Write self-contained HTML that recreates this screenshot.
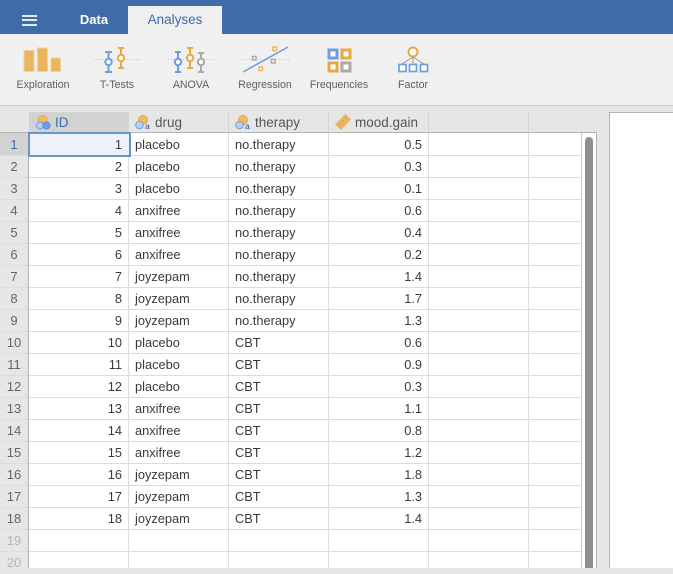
<!DOCTYPE html>
<html>
<head>
<meta charset="utf-8">
<style>
html,body{margin:0;padding:0;}
body{width:673px;height:568px;overflow:hidden;position:relative;background:#e6e6e6;font-family:"Liberation Sans",sans-serif;font-size:12px;color:#333;}
.a{position:absolute;}
#top{left:0;top:0;width:673px;height:34px;background:#3e6ca8;}
#tab{left:128px;top:6px;width:94px;height:28px;background:#f0f0f0;color:#3e6ca8;text-align:center;line-height:28px;font-size:13.5px;}
#data{left:60px;top:6px;width:68px;height:28px;color:#fff;text-align:center;line-height:28px;font-size:13px;font-weight:bold;}
.bar{left:22px;width:15px;height:2px;background:#e4eaf3;}
#tb{left:0;top:34px;width:673px;height:71px;background:#f0f0f0;border-bottom:1px solid #d0d0d0;}
.lbl{top:79px;height:12px;line-height:12px;font-size:10.6px;color:#606060;text-align:center;}
.hd{top:112px;height:20px;line-height:21px;font-size:13.5px;color:#555;}
.rh{left:0;width:28px;height:22px;line-height:23px;text-align:center;font-size:13px;color:#666;background:#e6e6e6;}
.row{left:0;width:581px;height:1px;background:#dcdcdc;}
.col{top:133px;width:1px;height:435px;background:#dcdcdc;}
.c{height:22px;line-height:23px;font-size:12.8px;color:#3a3a3a;white-space:nowrap;}
.n{text-align:right;}
</style>
</head>
<body>
<div class="a" id="top"></div>
<div class="a bar" style="top:15px"></div>
<div class="a bar" style="top:19px"></div>
<div class="a bar" style="top:24px"></div>
<div class="a" id="data">Data</div>
<div class="a" id="tab">Analyses</div>
<div class="a" id="tb"></div>

<svg class="a" style="left:0;top:34px" width="673" height="71" viewBox="0 34 673 71">
<g fill="#ebb55e" stroke="#f1d29b" stroke-width="1">
<rect x="24" y="50.500" width="10" height="21"/><rect x="37.500" y="48" width="10" height="23.500"/><rect x="51" y="58" width="9.500" height="13.500"/>
</g>
<g stroke="#b9c7d8" stroke-width="1" stroke-dasharray="1 2">
<line x1="94" y1="59.500" x2="140" y2="59.500"/><line x1="168" y1="59.500" x2="214" y2="59.500"/><line x1="243" y1="59.500" x2="289" y2="59.500"/>
</g>
<g fill="none" stroke-width="2">
<g stroke="#6d9ee3"><path d="M105 52h7M108.500 52v19M105 72h7"/><circle cx="108.500" cy="62" r="3.200" fill="#fff"/></g>
<g stroke="#e6aa43"><path d="M118 48h6M121 48v20M118 68h6"/><circle cx="121" cy="58" r="3.200" fill="#fff"/></g>
<g stroke="#6d9ee3"><path d="M175 52h6M178 52v19M175 72h6"/><circle cx="178" cy="62" r="3.200" fill="#fff"/></g>
<g stroke="#e6aa43"><path d="M187 48h6M190 48v20M187 68h6"/><circle cx="190" cy="58" r="3.200" fill="#fff"/></g>
<g stroke="#aaa"><path d="M198 53h6M201 53v19M198 72h6"/><circle cx="201" cy="62" r="3.200" fill="#fff"/></g>
</g>
<line x1="243" y1="72" x2="288" y2="47" stroke="#6d9ee3" stroke-width="1.500"/>
<g fill="#fff" stroke-width="1.500">
<rect x="252.500" y="56.500" width="3.500" height="3.500" stroke="#aaa"/>
<rect x="271.500" y="59.500" width="3.500" height="3.500" stroke="#aaa"/>
<rect x="273" y="47" width="3.500" height="3.500" stroke="#ebb55c"/>
<rect x="259" y="67" width="3.500" height="3.500" stroke="#ebb55c"/>
</g>
<g fill="#fff" stroke-width="3">
<rect x="329" y="50" width="8" height="8" stroke="#6d9ee3"/>
<rect x="342" y="50" width="8" height="8" stroke="#e6aa43"/>
<rect x="329" y="63" width="8" height="8" stroke="#e6aa43"/>
<rect x="342" y="63" width="8" height="8" stroke="#aaa"/>
</g>
<g stroke="#999" stroke-width="1" fill="none"><path d="M413 57L402 64M413 57V64M413 57L424 64"/></g>
<circle cx="413" cy="52" r="4.500" fill="#fff" stroke="#e6aa43" stroke-width="2"/>
<g fill="#fff" stroke="#6d9ee3" stroke-width="1.700">
<rect x="399" y="64.500" width="7" height="7"/><rect x="409.500" y="64.500" width="7" height="7"/><rect x="420.500" y="64.500" width="7" height="7"/>
</g>
</svg>

<div class="a lbl" style="left:5px;width:76px">Exploration</div>
<div class="a lbl" style="left:87px;width:60px">T-Tests</div>
<div class="a lbl" style="left:161px;width:60px">ANOVA</div>
<div class="a lbl" style="left:230px;width:70px">Regression</div>
<div class="a lbl" style="left:304px;width:70px">Frequencies</div>
<div class="a lbl" style="left:383px;width:60px">Factor</div>

<!-- header background -->
<div class="a" style="left:29px;top:112px;width:100px;height:20px;background:#d2d2d2;"></div>

<!-- grid -->
<div class="a" style="left:28px;top:133px;width:554px;height:435px;background:#fff;"></div>
<div class="a" style="left:582px;top:133px;width:14px;height:435px;background:#fff;"></div>
<div class="a" style="left:581px;top:133px;width:1px;height:435px;background:#c8c8c8;"></div>
<div class="a" style="left:596px;top:133px;width:1px;height:435px;background:#b4b4b4;"></div>
<div class="a" style="left:585px;top:137px;width:8px;height:431px;background:#8e8e8e;border-radius:4px 4px 0 0;"></div>
<div class="a" style="left:609px;top:112px;width:64px;height:456px;background:#fff;border-left:1px solid #b4b4b4;border-top:1px solid #b4b4b4;box-sizing:border-box;"></div>

<!-- header -->
<div class="a hd" style="left:55px;color:#3e6ca8;">ID</div>
<div class="a hd" style="left:155px;">drug</div>
<div class="a hd" style="left:255px;">therapy</div>
<div class="a hd" style="left:355px;">mood.gain</div>
<div class="a" style="left:128px;top:112px;width:1px;height:21px;background:#d4d4d4"></div>
<div class="a" style="left:228px;top:112px;width:1px;height:21px;background:#d4d4d4"></div>
<div class="a" style="left:328px;top:112px;width:1px;height:21px;background:#d4d4d4"></div>
<div class="a" style="left:428px;top:112px;width:1px;height:21px;background:#d4d4d4"></div>
<div class="a" style="left:528px;top:112px;width:1px;height:21px;background:#d4d4d4"></div>

<svg class="a" style="left:0;top:105px" width="360" height="28" viewBox="0 105 360 28">
<circle cx="42.700" cy="120" r="4.500" fill="#f0bb62" stroke="#e6aa43"/>
<circle cx="40" cy="125.500" r="3.500" fill="#b6cff2" stroke="#6d9ee3"/>
<circle cx="46.500" cy="125.500" r="3.500" fill="#6d9ee3" stroke="#5a8edb"/>
<circle cx="143" cy="120" r="4.500" fill="#f0bb62" stroke="#e6aa43"/>
<circle cx="139.500" cy="125" r="3.800" fill="#b6cff2" stroke="#6d9ee3"/>
<text x="145" y="129" font-family="Liberation Sans" font-size="8.500" font-weight="bold" fill="#3e78c8">a</text>
<circle cx="243" cy="120" r="4.500" fill="#f0bb62" stroke="#e6aa43"/>
<circle cx="239.500" cy="125" r="3.800" fill="#b6cff2" stroke="#6d9ee3"/>
<text x="245" y="129" font-family="Liberation Sans" font-size="8.500" font-weight="bold" fill="#3e78c8">a</text>
<path d="M335 124.500L345.500 114L351 119.500L341 130Z" fill="#eeb457"/>
<path d="M339 123l2 2M342 120l2 2M345 117l2 2" stroke="#d2933a" stroke-width="0.800"/>
</svg>

<!-- row headers -->
<div class="a rh" style="top:133px;background:#d2d2d2;color:#3e6ca8;">1</div>
<div class="a rh" style="top:155px">2</div>
<div class="a rh" style="top:177px">3</div>
<div class="a rh" style="top:199px">4</div>
<div class="a rh" style="top:221px">5</div>
<div class="a rh" style="top:243px">6</div>
<div class="a rh" style="top:265px">7</div>
<div class="a rh" style="top:287px">8</div>
<div class="a rh" style="top:309px">9</div>
<div class="a rh" style="top:331px">10</div>
<div class="a rh" style="top:353px">11</div>
<div class="a rh" style="top:375px">12</div>
<div class="a rh" style="top:397px">13</div>
<div class="a rh" style="top:419px">14</div>
<div class="a rh" style="top:441px">15</div>
<div class="a rh" style="top:463px">16</div>
<div class="a rh" style="top:485px">17</div>
<div class="a rh" style="top:507px">18</div>
<div class="a rh" style="top:529px;color:#b5b5b5">19</div>
<div class="a rh" style="top:551px;color:#b5b5b5">20</div>

<!-- grid lines -->
<div class="a row" style="top:155px"></div><div class="a row" style="top:177px"></div><div class="a row" style="top:199px"></div><div class="a row" style="top:221px"></div><div class="a row" style="top:243px"></div><div class="a row" style="top:265px"></div><div class="a row" style="top:287px"></div><div class="a row" style="top:309px"></div><div class="a row" style="top:331px"></div><div class="a row" style="top:353px"></div><div class="a row" style="top:375px"></div><div class="a row" style="top:397px"></div><div class="a row" style="top:419px"></div><div class="a row" style="top:441px"></div><div class="a row" style="top:463px"></div><div class="a row" style="top:485px"></div><div class="a row" style="top:507px"></div><div class="a row" style="top:529px"></div><div class="a row" style="top:551px"></div>
<div class="a col" style="left:128px"></div><div class="a col" style="left:228px"></div><div class="a col" style="left:328px"></div><div class="a col" style="left:428px"></div><div class="a col" style="left:528px"></div>
<div class="a" style="left:28px;top:133px;width:1px;height:435px;background:#b4b4b4;"></div>
<div class="a" style="left:0;top:132px;width:597px;height:1px;background:#b4b4b4;"></div>

<!-- selected cell -->
<div class="a" style="left:28px;top:132px;width:103px;height:25px;box-sizing:border-box;border:2px solid #6a94c6;background:#edf1f9;"></div>

<!-- cells -->
<div class="a c n" style="left:29px;width:93px;top:133px">1</div><div class="a c" style="left:135px;top:133px">placebo</div><div class="a c" style="left:235px;top:133px">no.therapy</div><div class="a c n" style="left:329px;width:93px;top:133px">0.5</div>
<div class="a c n" style="left:29px;width:93px;top:155px">2</div><div class="a c" style="left:135px;top:155px">placebo</div><div class="a c" style="left:235px;top:155px">no.therapy</div><div class="a c n" style="left:329px;width:93px;top:155px">0.3</div>
<div class="a c n" style="left:29px;width:93px;top:177px">3</div><div class="a c" style="left:135px;top:177px">placebo</div><div class="a c" style="left:235px;top:177px">no.therapy</div><div class="a c n" style="left:329px;width:93px;top:177px">0.1</div>
<div class="a c n" style="left:29px;width:93px;top:199px">4</div><div class="a c" style="left:135px;top:199px">anxifree</div><div class="a c" style="left:235px;top:199px">no.therapy</div><div class="a c n" style="left:329px;width:93px;top:199px">0.6</div>
<div class="a c n" style="left:29px;width:93px;top:221px">5</div><div class="a c" style="left:135px;top:221px">anxifree</div><div class="a c" style="left:235px;top:221px">no.therapy</div><div class="a c n" style="left:329px;width:93px;top:221px">0.4</div>
<div class="a c n" style="left:29px;width:93px;top:243px">6</div><div class="a c" style="left:135px;top:243px">anxifree</div><div class="a c" style="left:235px;top:243px">no.therapy</div><div class="a c n" style="left:329px;width:93px;top:243px">0.2</div>
<div class="a c n" style="left:29px;width:93px;top:265px">7</div><div class="a c" style="left:135px;top:265px">joyzepam</div><div class="a c" style="left:235px;top:265px">no.therapy</div><div class="a c n" style="left:329px;width:93px;top:265px">1.4</div>
<div class="a c n" style="left:29px;width:93px;top:287px">8</div><div class="a c" style="left:135px;top:287px">joyzepam</div><div class="a c" style="left:235px;top:287px">no.therapy</div><div class="a c n" style="left:329px;width:93px;top:287px">1.7</div>
<div class="a c n" style="left:29px;width:93px;top:309px">9</div><div class="a c" style="left:135px;top:309px">joyzepam</div><div class="a c" style="left:235px;top:309px">no.therapy</div><div class="a c n" style="left:329px;width:93px;top:309px">1.3</div>
<div class="a c n" style="left:29px;width:93px;top:331px">10</div><div class="a c" style="left:135px;top:331px">placebo</div><div class="a c" style="left:235px;top:331px">CBT</div><div class="a c n" style="left:329px;width:93px;top:331px">0.6</div>
<div class="a c n" style="left:29px;width:93px;top:353px">11</div><div class="a c" style="left:135px;top:353px">placebo</div><div class="a c" style="left:235px;top:353px">CBT</div><div class="a c n" style="left:329px;width:93px;top:353px">0.9</div>
<div class="a c n" style="left:29px;width:93px;top:375px">12</div><div class="a c" style="left:135px;top:375px">placebo</div><div class="a c" style="left:235px;top:375px">CBT</div><div class="a c n" style="left:329px;width:93px;top:375px">0.3</div>
<div class="a c n" style="left:29px;width:93px;top:397px">13</div><div class="a c" style="left:135px;top:397px">anxifree</div><div class="a c" style="left:235px;top:397px">CBT</div><div class="a c n" style="left:329px;width:93px;top:397px">1.1</div>
<div class="a c n" style="left:29px;width:93px;top:419px">14</div><div class="a c" style="left:135px;top:419px">anxifree</div><div class="a c" style="left:235px;top:419px">CBT</div><div class="a c n" style="left:329px;width:93px;top:419px">0.8</div>
<div class="a c n" style="left:29px;width:93px;top:441px">15</div><div class="a c" style="left:135px;top:441px">anxifree</div><div class="a c" style="left:235px;top:441px">CBT</div><div class="a c n" style="left:329px;width:93px;top:441px">1.2</div>
<div class="a c n" style="left:29px;width:93px;top:463px">16</div><div class="a c" style="left:135px;top:463px">joyzepam</div><div class="a c" style="left:235px;top:463px">CBT</div><div class="a c n" style="left:329px;width:93px;top:463px">1.8</div>
<div class="a c n" style="left:29px;width:93px;top:485px">17</div><div class="a c" style="left:135px;top:485px">joyzepam</div><div class="a c" style="left:235px;top:485px">CBT</div><div class="a c n" style="left:329px;width:93px;top:485px">1.3</div>
<div class="a c n" style="left:29px;width:93px;top:507px">18</div><div class="a c" style="left:135px;top:507px">joyzepam</div><div class="a c" style="left:235px;top:507px">CBT</div><div class="a c n" style="left:329px;width:93px;top:507px">1.4</div>
</body>
</html>
